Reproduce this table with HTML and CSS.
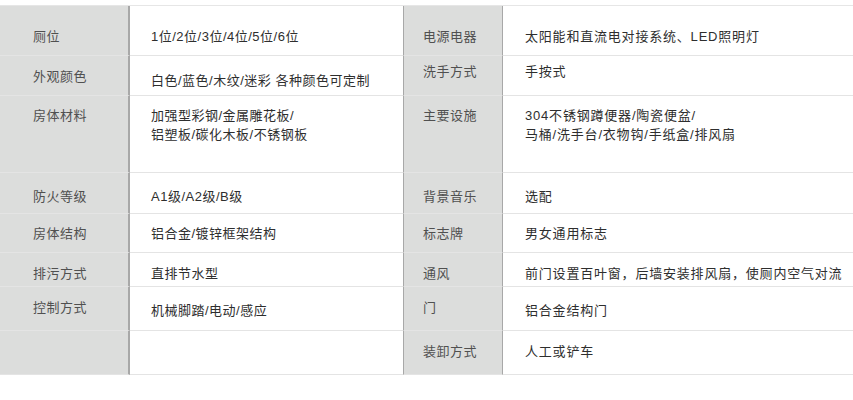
FILE: index.html
```html
<!DOCTYPE html>
<html lang="zh-CN">
<head>
<meta charset="utf-8">
<title>规格参数</title>
<link rel="stylesheet" href="styles.css">
</head>
<body>
<table class="spec">
  <colgroup>
    <col class="c-label1">
    <col class="c-value1">
    <col class="c-label2">
    <col class="c-value2">
  </colgroup>
  <tbody>
    <tr class="r1">
      <td class="lab lab1">厕位</td>
      <td class="val">1位/2位/3位/4位/5位/6位</td>
      <td class="lab lab2">电源电器</td>
      <td class="val val2">太阳能和直流电对接系统、LED照明灯</td>
    </tr>
    <tr class="r2">
      <td class="lab lab1">外观颜色</td>
      <td class="val low">白色/蓝色/木纹/迷彩 各种颜色可定制</td>
      <td class="lab lab2 high">洗手方式</td>
      <td class="val val2 high">手按式</td>
    </tr>
    <tr class="r3">
      <td class="lab lab1">房体材料</td>
      <td class="val">加强型彩钢/金属雕花板/<br>铝塑板/碳化木板/不锈钢板</td>
      <td class="lab lab2">主要设施</td>
      <td class="val val2">304不锈钢蹲便器/陶瓷便盆/<br>马桶/洗手台/衣物钩/手纸盒/排风扇</td>
    </tr>
    <tr class="r4">
      <td class="lab lab1">防火等级</td>
      <td class="val">A1级/A2级/B级</td>
      <td class="lab lab2">背景音乐</td>
      <td class="val val2">选配</td>
    </tr>
    <tr class="r5">
      <td class="lab lab1">房体结构</td>
      <td class="val">铝合金/镀锌框架结构</td>
      <td class="lab lab2">标志牌</td>
      <td class="val val2">男女通用标志</td>
    </tr>
    <tr class="r6">
      <td class="lab lab1">排污方式</td>
      <td class="val">直排节水型</td>
      <td class="lab lab2">通风</td>
      <td class="val val2">前门设置百叶窗，后墙安装排风扇，使厕内空气对流</td>
    </tr>
    <tr class="r7">
      <td class="lab lab1">控制方式</td>
      <td class="val low">机械脚踏/电动/感应</td>
      <td class="lab lab2">门</td>
      <td class="val val2 low">铝合金结构门</td>
    </tr>
    <tr class="r8">
      <td class="lab lab1"></td>
      <td class="val"></td>
      <td class="lab lab2">装卸方式</td>
      <td class="val val2">人工或铲车</td>
    </tr>
  </tbody>
</table>
</body>
</html>
```

FILE: styles.css
```css
html, body {
  margin: 0;
  padding: 0;
  background: #ffffff;
}

body {
  font-family: "Liberation Sans", "Noto Sans CJK SC", sans-serif;
  font-size: 13px;
  letter-spacing: 0.5px;
}

.spec {
  margin-top: 5px;
  width: 853px;
  table-layout: fixed;
  border-collapse: separate;
  border-spacing: 0;
  border-top: 1px solid #e6e6e6;
}

.c-label1 { width: 130px; }
.c-value1 { width: 273px; }
.c-label2 { width: 100px; }
.c-value2 { width: 350px; }

.spec td {
  padding: 0;
  vertical-align: middle;
  line-height: 19px;
  border-bottom: 1px solid #e4e4e4;
  white-space: nowrap;
}

.lab {
  background: #dcdddc;
  color: #505050;
}

.lab1 {
  padding-left: 33px !important;
  border-right: 2px solid #a8a8a8;
}

.lab2 {
  padding-left: 19px !important;
  border-left: 1px solid #a8a8a8;
  border-right: 1px solid #a8a8a8;
}

.val {
  color: #2e2e2e;
}

.spec td.val { padding-left: 21px; }
.spec td.val2 { padding-left: 22px; letter-spacing: 0.8px; }

.r1 { height: 50px; }
.r1 td { padding-top: 12px; }

.r2 { height: 40px; }
.r2 td { padding-top: 2px; }
.r2 td.low { padding-top: 10px; }
.r2 td.high { padding-top: 0; padding-bottom: 8px; }

.r3 { height: 77px; }
.r3 td { vertical-align: top; padding-top: 10px; }

.r4 { height: 41px; }
.r4 td { padding-top: 6px; }

.r5 { height: 39px; }
.r5 td { padding-top: 1px; }

.r6 { height: 34px; }
.r6 td { padding-top: 7px; }

.r7 { height: 44px; }
.r7 td { padding-bottom: 2px; }
.r7 td.low { padding-bottom: 0; padding-top: 4px; }

.r8 { height: 44px; }
.r8 td { padding-bottom: 2px; }
```
